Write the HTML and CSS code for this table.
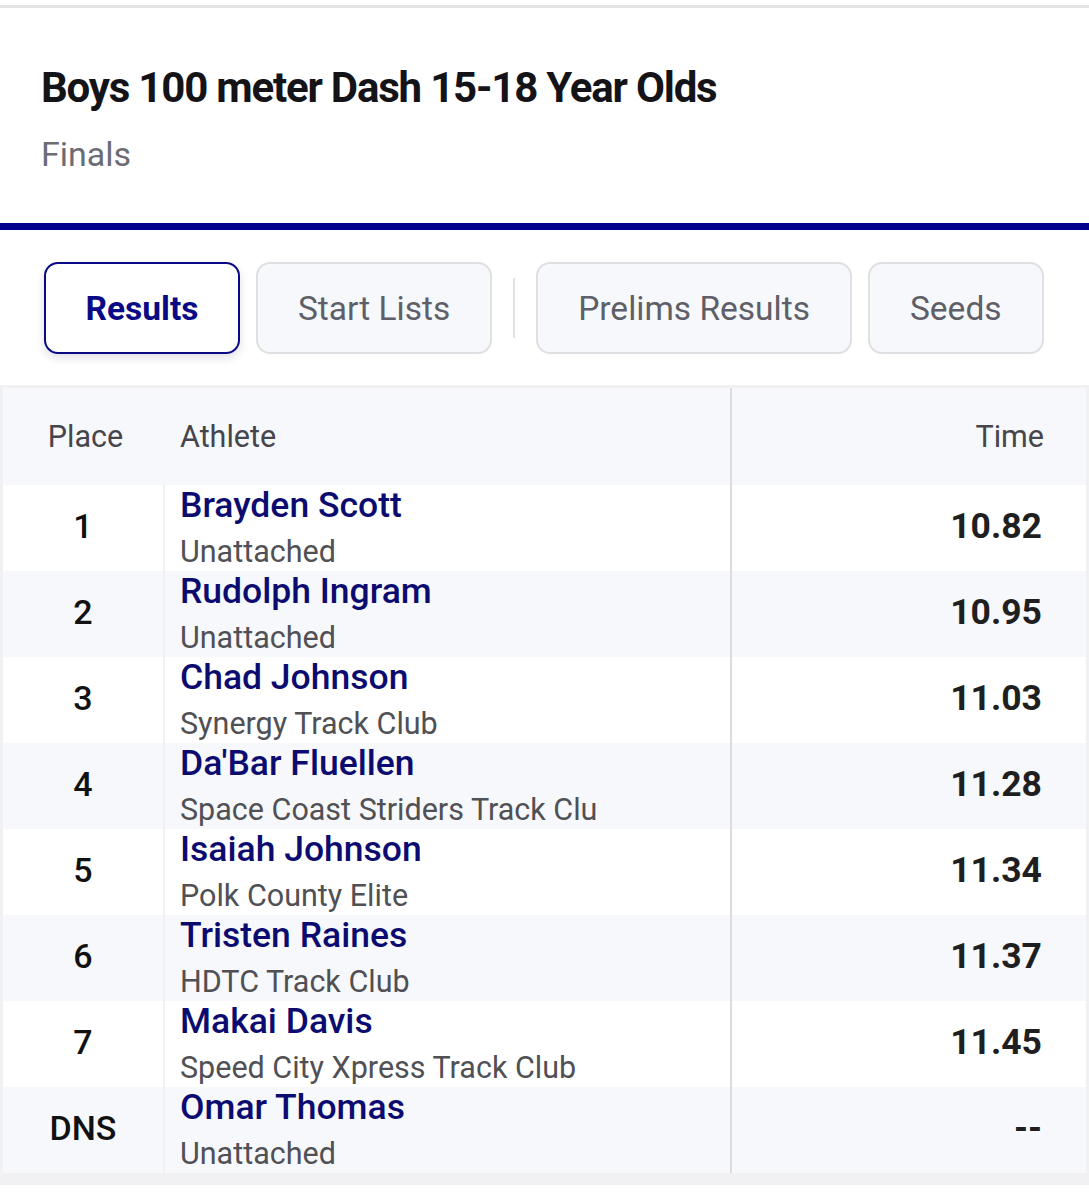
FILE: index.html
```html
<!DOCTYPE html>
<html>
<head>
<meta charset="utf-8">
<link rel="stylesheet" href="styles.css">
</head>
<body>
<div class="topline"></div>
<header class="event">
  <h1 class="title">Boys 100 meter Dash 15-18 Year Olds</h1>
  <div class="round">Finals</div>
</header>
<div class="bar"></div>
<nav class="tabs">
  <button class="tab active">Results</button>
  <button class="tab">Start Lists</button>
  <span class="sep"></span>
  <button class="tab">Prelims Results</button>
  <button class="tab">Seeds</button>
</nav>
<div class="table">
  <div class="row head">
    <div class="c-place">Place</div>
    <div class="c-ath">Athlete</div>
    <div class="c-time">Time</div>
  </div>
  <div class="row">
    <div class="c-place">1</div>
    <div class="c-ath"><div class="name">Brayden Scott</div><div class="club">Unattached</div></div>
    <div class="c-time">10.82</div>
  </div>
  <div class="row alt">
    <div class="c-place">2</div>
    <div class="c-ath"><div class="name">Rudolph Ingram</div><div class="club">Unattached</div></div>
    <div class="c-time">10.95</div>
  </div>
  <div class="row">
    <div class="c-place">3</div>
    <div class="c-ath"><div class="name">Chad Johnson</div><div class="club">Synergy Track Club</div></div>
    <div class="c-time">11.03</div>
  </div>
  <div class="row alt">
    <div class="c-place">4</div>
    <div class="c-ath"><div class="name">Da'Bar Fluellen</div><div class="club">Space Coast Striders Track Clu</div></div>
    <div class="c-time">11.28</div>
  </div>
  <div class="row">
    <div class="c-place">5</div>
    <div class="c-ath"><div class="name">Isaiah Johnson</div><div class="club">Polk County Elite</div></div>
    <div class="c-time">11.34</div>
  </div>
  <div class="row alt">
    <div class="c-place">6</div>
    <div class="c-ath"><div class="name">Tristen Raines</div><div class="club">HDTC Track Club</div></div>
    <div class="c-time">11.37</div>
  </div>
  <div class="row">
    <div class="c-place">7</div>
    <div class="c-ath"><div class="name">Makai Davis</div><div class="club">Speed City Xpress Track Club</div></div>
    <div class="c-time">11.45</div>
  </div>
  <div class="row alt">
    <div class="c-place">DNS</div>
    <div class="c-ath"><div class="name">Omar Thomas</div><div class="club">Unattached</div></div>
    <div class="c-time">--</div>
  </div>
</div>
</body>
</html>
```
FILE: styles.css
```css
* { box-sizing: border-box; }
html, body { margin: 0; padding: 0; background: #fff; }
body { font-family: Roboto, "Liberation Sans", sans-serif; color: #1b1b1f; width: 1089px; }

.topline { height: 3px; margin-top: 5px; background: #e4e4e6; }

.event { padding: 55px 42px 0 41px; height: 215px; }
.title { margin: 0; font-size: 42px; font-weight: 700; color: #141418; line-height: 50px; letter-spacing: -1.2px; }
.round { margin-top: 21px; font-size: 34px; color: #6c6c74; line-height: 40px; }

.bar { height: 7px; background: #00008f; }

.tabs { display: flex; align-items: center; gap: 16px; padding: 32px 0 31px 44px; }
.tab { font-family: Roboto, "Liberation Sans", sans-serif; font-size: 33.5px; color: #5e5f68; background: #f7f8fb; border: 2px solid #e0e0e4; border-radius: 14px; height: 92px; padding: 0 40px; }
.tab.active { background: #fff; border-color: #0a0a86; color: #0a0a86; font-weight: 700; box-shadow: 0 4px 10px rgba(0, 0, 60, 0.12); padding: 0 39.5px; }
.sep { width: 2px; height: 60px; background: #e2e2e5; margin: 0 5px; }

.table { border: 3px solid #f1f1f3; border-bottom-width: 12px; margin: 0; }
.row { display: grid; grid-template-columns: 162px 567px 1fr; height: 86px; background: #fff; }
.row.alt { background: #f7f8fb; }
.row.head { height: 97px; background: #f7f8fb; }
.c-place { display: flex; align-items: center; justify-content: center; font-size: 34px; font-weight: 500; color: #111; border-right: 2px solid #f1f1f3; padding-bottom: 4px; }
.c-ath { padding-left: 15px; border-right: 2px solid #dcdcdf; display: flex; flex-direction: column; justify-content: center; }
.c-time { display: flex; align-items: center; justify-content: flex-end; padding-right: 44px; font-size: 35.5px; font-weight: 700; color: #1f1f22; padding-bottom: 4px; }
.row.head .c-place, .row.head .c-ath, .row.head .c-time { font-size: 30.5px; font-weight: 400; color: #45454b; padding-bottom: 0; }
.row.head .c-place { border-right: none; padding-left: 3px; }
.row.head .c-time { padding-right: 42px; }
.name { font-size: 35.5px; font-weight: 500; color: #0c0c70; line-height: 42px; margin-top: -3px; }
.club { font-size: 30.5px; color: #505055; line-height: 36px; margin-top: 8px; }
```
